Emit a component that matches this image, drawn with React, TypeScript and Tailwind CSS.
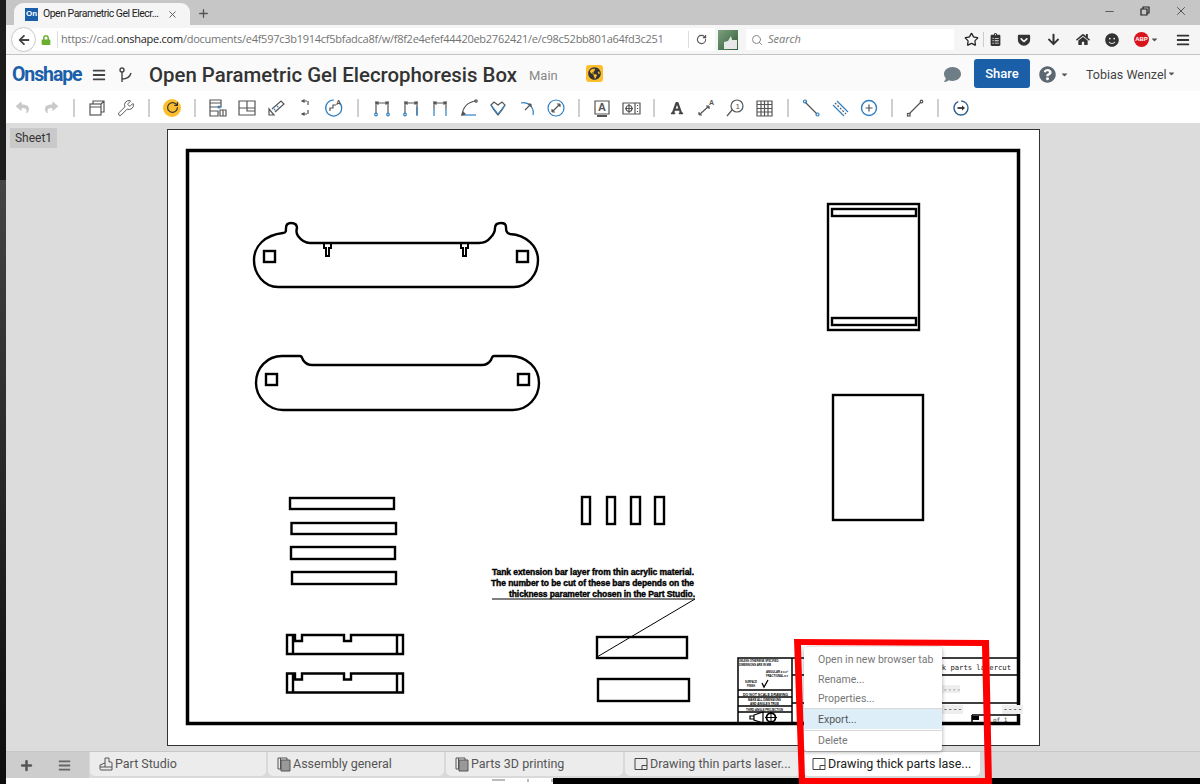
import React from "react";
import { FaReply, FaShare, FaLock, FaArrowLeft, FaClipboardList, FaGetPocket, FaArrowDown, FaHome, FaSmile, FaComment, FaQuestionCircle, FaGlobeAmericas, FaCaretDown, FaBars, FaFont } from "react-icons/fa";
import { RotateCw, Search, Star, Wrench, X, Plus, Minus } from "lucide-react";

const G = "#555";
const B = "#2f7fc1";

function Cell({ children }: { children?: React.ReactNode }) {
  return <div className="w-[29px] flex items-center justify-center shrink-0">{children}</div>;
}
function Ico({ children }: { children: React.ReactNode }) {
  return (
    <svg width="20" height="20" viewBox="0 0 20 20" fill="none" stroke={G} strokeWidth="1.2">
      {children}
    </svg>
  );
}
function Sep({ w }: { w: string }) {
  return (
    <div className={`${w} flex justify-center shrink-0`}>
      <div className="w-[2px] h-[18px] bg-[#cfcfcf]" />
    </div>
  );
}

function Toolbar() {
  return (
    <div className="h-[32px] bg-white flex items-center pl-[1.5px] pt-px shrink-0">
      <Cell><FaReply size={13} color="#c9c9c9" /></Cell>
      <Cell><FaShare size={13} color="#c9c9c9" /></Cell>
      <Sep w="w-[17px]" />
      <Cell><Ico><rect x="3" y="6" width="11" height="11" /><path d="M6 6V3h11v11h-3M14 6l3-3M3 9h11" /></Ico></Cell>
      <Cell><Wrench size={18} color={G} strokeWidth={1.3} /></Cell>
      <Sep w="w-[17px]" />
      <Cell>
        <div className="w-[18px] h-[18px] rounded-full bg-[#fdbe2e] flex items-center justify-center">
          <RotateCw size={13} color="#333" strokeWidth={2.2} />
        </div>
      </Cell>
      <Sep w="w-[17px]" />
      <Cell><Ico><path d="M2 2h11v7H2zM2 5h11M2 9v9h8v-5H2M12 12h6v6h-6zM15 12v6" /><circle cx="11" cy="9" r="1" stroke={B} /></Ico></Cell>
      <Cell><Ico><path d="M2 3h16v14H2zM2 10h16M10 3v7M10 10v3h8" /></Ico></Cell>
      <Cell><Ico><path d="M3 17v-6l5 6zM6 11l9-8 3 3-9 8" /><path d="M8 11l2 2M11 8l2 2" stroke={B} strokeDasharray="2 1" /></Ico></Cell>
      <Cell><Ico><path d="M9 3h3M13 3v4M13 12v4M9 16h3M11 3H8M10 16H7" /><path d="M7 3l2-1v2zM7 16l2-1v2z" fill={G} /></Ico></Cell>
      <Cell><Ico><path d="M15 4a8 8 0 1 1-5-2" stroke={B} /><path d="M6 13v-3h3V7h3" /><text x="12" y="7" fontSize="7" fontFamily="Liberation Sans" fontWeight="700" fill={G} stroke="none">A</text></Ico></Cell>
      <Sep w="w-[19px]" />
      <Cell><Ico><path d="M4 3v12M16 3v12M4 5h12" /><path d="M4 5l2-1v2zM16 5l-2-1v2z" fill={G} /><circle cx="4" cy="16.5" r="1.3" stroke={B} /><circle cx="16" cy="16.5" r="1.3" stroke={B} /></Ico></Cell>
      <Cell><Ico><path d="M4 3v12M16 3v14M4 5h12" /><path d="M4 5l2-1v2zM16 5l-2-1v2z" fill={G} /><circle cx="4" cy="16.5" r="1.3" stroke={B} /><path d="M16 9v9" stroke={B} /></Ico></Cell>
      <Cell><Ico><path d="M4 3v8M16 3v8M4 5h12" /><path d="M4 5l2-1v2zM16 5l-2-1v2z" fill={G} /><path d="M4 11v7M16 11v7" stroke={B} /></Ico></Cell>
      <Cell><Ico><path d="M17 3C9 4 4 9 3 17" /><path d="M3 17h14" stroke={B} /><circle cx="17" cy="3" r="1.2" /><path d="M3 17l1-3 2 2z" fill={G} /></Ico></Cell>
      <Cell><Ico><path d="M3 7l3-3 4 3 4-3 3 3-3 5-4 5-4-5z" /><path d="M3 7l7 9M17 7l-7 9" stroke={B} /></Ico></Cell>
      <Cell><Ico><path d="M4 5a10 10 0 0 1 12 12" stroke={B} /><path d="M8 12l6-6M14 6v3M14 6h-3" /></Ico></Cell>
      <Cell><Ico><circle cx="10" cy="10" r="8" stroke={B} /><path d="M6 14l8-8M14 6v3M14 6h-3M6 14v-3M6 14h3" /></Ico></Cell>
      <Sep w="w-[17px]" />
      <Cell><Ico><path d="M3 3h14v13H3z" /><path d="M5 18h10" strokeWidth="2" /><text x="6" y="13" fontSize="11" fontWeight="700" fontFamily="Liberation Sans" fill={G} stroke="none">A</text></Ico></Cell>
      <Cell><Ico><path d="M2 5h17v11H2zM14 5v11" /><circle cx="8" cy="10.5" r="3" /><path d="M8 6v9M4 10.5h8M16.5 7v1M16.5 10v1M16.5 13v1" /></Ico></Cell>
      <Sep w="w-[17px]" />
      <Cell><FaFont size={14} color="#444" /></Cell>
      <Cell><Ico><path d="M3 17L13 8M3 17v-3M3 17h3M13 8v3M13 8h-3" /><text x="13" y="7" fontSize="7" fontFamily="Liberation Sans" fontWeight="700" fill={G} stroke="none">A</text></Ico></Cell>
      <Cell><Ico><circle cx="12" cy="8" r="6" /><path d="M7 12l-5 6" /><text x="10.5" y="11" fontSize="8" fontFamily="Liberation Sans" fill={G} stroke="none">1</text></Ico></Cell>
      <Cell><Ico><path d="M3 3h15v15H3zM3 6.5h15M3 10.5h15M3 14h15M7 3v15M10.5 3v15M14 3v15" /></Ico></Cell>
      <Sep w="w-[18px]" />
      <Cell><Ico><path d="M4 4l12 12" /><circle cx="4" cy="3.5" r="1.5" stroke={B} /><circle cx="16.5" cy="16.5" r="1.5" stroke={B} /></Ico></Cell>
      <Cell><Ico><path d="M3 7l11 11M7 3l11 11" stroke={B} /><path d="M5 5l11 11" strokeDasharray="2 1.5" /></Ico></Cell>
      <Cell><Ico><circle cx="10" cy="10" r="7.5" stroke={B} strokeWidth="1.4" /><path d="M10 6.5v7M6.5 10h7" /></Ico></Cell>
      <Sep w="w-[17px]" />
      <Cell><Ico><path d="M4 16L16 4" /><rect x="2.5" y="15.5" width="2.5" height="2.5" /><circle cx="16.5" cy="3.5" r="1.3" /></Ico></Cell>
      <Sep w="w-[17px]" />
      <Cell><Ico><circle cx="10" cy="10" r="7" stroke="#2a5f8f" strokeWidth="1.4" strokeDasharray="30 3" /><path d="M6.5 10h6" strokeWidth="1.8" stroke="#333" /><path d="M11 7.5l3 2.5-3 2.5z" fill="#333" stroke="none" /></Ico></Cell>
    </div>
  );
}

function BrowserChrome() {
  return (
    <>
      <div className="h-[25px] bg-[#c6c6c6] flex items-end shrink-0 pl-[8px] relative">
        <div className="w-[176px] h-[22px] bg-[#f5f5f5] rounded-t-[9px] flex items-center pl-[11px] shrink-0">
          <div className="w-[13px] h-[13px] bg-[#1a5fa8] text-white text-[8px] font-bold flex items-center justify-center font-['Liberation_Sans'] shrink-0">On</div>
          <span className="ml-[5px] text-[10.5px] text-[#222] w-[124px] whitespace-nowrap font-['Roboto'] tracking-[-0.5px] shrink-0">Open Parametric Gel Elecr...</span>
          <X size={11} color="#555" className="shrink-0" />
        </div>
        <Plus size={13} color="#555" strokeWidth={2.4} className="ml-[7px] mb-[5px]" />
        <div className="ml-auto flex items-center mb-[7px] pr-[12px] gap-[23px] text-[#333]">
          <Minus size={13} color="#222" strokeWidth={1.2} />
          <svg width="12" height="12" viewBox="0 0 12 12" fill="none" stroke="#222" strokeWidth="1.2"><path d="M2 4h6v6H2zM4 4V2h6v6H8" /></svg>
          <X size={14} color="#222" strokeWidth={1.2} />
        </div>
      </div>
      <div className="h-[30px] bg-[#f5f5f5] border-b border-[#c4c4c4] flex items-center shrink-0 pl-[5px]">
        <div className="w-[25px] h-[25px] rounded-full bg-white border border-[#c9c9c9] flex items-center justify-center shrink-0 z-10">
          <FaArrowLeft size={12} color="#444" />
        </div>
        <div className="-ml-[4px] w-[683px] h-[23px] bg-white flex items-center pl-[9px] shrink-0">
          <FaLock size={10} color="#6ab02e" className="shrink-0" />
          <div className="ml-[6px] w-px h-[17px] bg-[#ddd] shrink-0" />
          <span className="ml-[3px] text-[11px] text-[#737373] whitespace-nowrap w-[608px] shrink-0 font-['Open_Sans'] tracking-[-0.26px]">
            https://cad.<span className="text-[#222]">onshape.com</span>/documents/e4f597c3b1914cf5bfadca8f/w/f8f2e4efef44420eb2762421/e/c98c52bb801a64fd3c251
          </span>
          <div className="ml-[19px] w-px h-[17px] bg-[#ddd] shrink-0" />
          <RotateCw size={11} color="#555" strokeWidth={2.4} className="ml-[7px] shrink-0" />
        </div>
        <svg width="20" height="20" viewBox="0 0 20 20" className="ml-[3px] shrink-0">
          <defs>
            <linearGradient id="g1" x1="0" y1="0" x2="1" y2="1"><stop offset="0" stopColor="#7f9f7f" /><stop offset="1" stopColor="#2f5f35" /></linearGradient>
          </defs>
          <rect width="20" height="20" fill="url(#g1)" />
          <path d="M6 19v-7l4-1 3-5 1 4h5v9z" fill="#e8e8e8" />
        </svg>
        <div className="ml-[8px] w-[208px] h-[21px] bg-white flex items-center pl-[5px] shrink-0">
          <Search size={12} color="#888" />
          <span className="ml-[5px] italic text-[11px] text-[#777] font-['Open_Sans']">Search</span>
        </div>
        <div className="ml-[10px] w-[15px] flex justify-center shrink-0"><Star size={15} color="#222" strokeWidth={2} /></div>
        <div className="ml-[4px] w-px h-[15px] bg-[#ccc] shrink-0" />
        <div className="ml-[4px] w-[14px] flex justify-center shrink-0"><FaClipboardList size={13} color="#333" /></div>
        <div className="ml-[15px] w-[14px] flex justify-center shrink-0"><FaGetPocket size={14} color="#333" /></div>
        <div className="ml-[15px] w-[14px] flex justify-center shrink-0"><FaArrowDown size={13} color="#333" /></div>
        <div className="ml-[16px] w-[14px] flex justify-center shrink-0"><FaHome size={15} color="#333" /></div>
        <div className="ml-[15px] w-[14px] flex justify-center shrink-0"><FaSmile size={14} color="#333" /></div>
        <div className="ml-[15px] w-[15px] h-[15px] rounded-full bg-[#d8141c] text-white text-[6px] font-bold flex items-center justify-center font-['Liberation_Sans'] shrink-0">ABP</div>
        <FaCaretDown size={9} color="#555" className="ml-[1px] shrink-0" />
        <div className="ml-[17px] shrink-0"><FaBars size={14} color="#333" /></div>
      </div>
    </>
  );
}

function Header() {
  return (
    <div className="h-[36px] bg-[#fafafa] flex items-center shrink-0 pl-[6px] font-['Roboto']">
      <span className="text-[#1a5fa8] text-[19.5px] mt-[4px] font-bold w-[69px] tracking-[-1.1px] whitespace-nowrap">Onshape</span>
      <div className="ml-[11px] mt-[4px]"><FaBars size={14} color="#444" /></div>
      <svg width="16" height="16" viewBox="0 0 16 16" fill="none" stroke="#444" strokeWidth="1.4" className="ml-[12px] mt-[4px]">
        <circle cx="4" cy="3" r="2" />
        <path d="M4 5v10M4 12c6 0 8-2 9-6" />
      </svg>
      <span className="ml-[15px] mt-[4px] w-[369px] text-[20.4px] font-medium text-[#333] whitespace-nowrap">Open Parametric Gel Elecrophoresis Box</span>
      <span className="ml-[11px] mt-[6px] w-[30px] text-[13px] text-[#888] whitespace-nowrap">Main</span>
      <div className="ml-[27px] w-[17px] h-[17px] rounded-[3px] bg-[#fdbe2e] flex items-center justify-center">
        <FaGlobeAmericas size={13} color="#333" />
      </div>
      <FaComment size={17} color="#6f7d87" className="ml-[341px] mt-[2px]" />
      <button className="ml-[13px] w-[56px] h-[29px] pt-[2px] rounded-[3px] bg-[#1a5fa8] text-white text-[13px] font-medium">Share</button>
      <FaQuestionCircle size={17} color="#5c6871" className="ml-[9px] mt-[3px]" />
      <FaCaretDown size={9} color="#555" className="ml-[4px] mt-[2px]" />
      <span className="ml-[17px] mt-[4px] text-[12.5px] text-[#444] w-[80px] whitespace-nowrap">Tobias Wenzel</span>
      <FaCaretDown size={9} color="#555" className="ml-px" />
    </div>
  );
}

function Drawing() {
  const bars = [
    [290, 498, 104, 11], [291.5, 523, 104.5, 11], [291, 547, 104, 12], [292, 572, 104, 12],
    [582, 497, 8, 27], [607, 497, 8, 27], [631, 497, 9, 27], [655, 497, 9, 27],
    [597, 637, 90, 21], [598, 679, 91, 22], [833, 395, 90, 125],
    [264, 251, 11, 11], [517, 251, 11, 11], [266, 374, 11, 11], [518, 374, 11, 11],
    [828, 204, 91, 126], [832, 209, 84, 7], [832, 318, 84, 7],
  ];
  const notched = (y: number) =>
    `M287 ${y}h8v6h7v-6h42v6h7v-6h52v19h-116zM293 ${y}v19M397 ${y}v19`;
  return (
    <svg viewBox="168 130 871 615" className="w-full h-full block" fill="none" stroke="#000" strokeWidth="2.4">
      <rect x="187.5" y="150.5" width="831" height="573" strokeWidth="3.5" />
      <path d="M278 287H514C528 287 538 274 538 260C538 246 526 235 510 234C506 233 506 230 506 227C506 224 504 223 501 223C497 223 495 225 495 228C495 232 494 234 491 237C488 241 484 243 479 243H310C304 243 301 240 298 236C296 233 296 231 297 228C297 225 295 223 291 223C288 223 286 225 286 228C286 231 286 233 283 233C265 235 254 246 254 260C254 274 264 287 278 287Z" />
      <path d="M324 243h7v5h-2v8h-3v-8h-2zM461 243h7v5h-2v8h-3v-8h-2z" strokeWidth="2" />
      <path d="M283 410H513C528 410 539 397 539 383C539 368 527 356 510 356H494C492 356 492 358 491 360C489 363 486 365 482 365H312C308 365 305 363 303 360C302 358 302 356 300 356H282C267 356 256 368 256 383C256 397 268 410 283 410Z" />
      {bars.map(([x, y, w, h], i) => (
        <rect key={i} x={x} y={y} width={w} height={h} />
      ))}
      <path d={notched(635)} />
      <path d={notched(673.5)} />
      <path d="M492 599H695L597 657" strokeWidth="1" />
      <g fontFamily="Liberation Sans" fontWeight="700" fontSize="8.5" fill="#000" stroke="#000" strokeWidth="0.4" textAnchor="end">
        <text x="694" y="575" textLength="202">Tank extension bar layer from thin acrylic material.</text>
        <text x="694" y="586" textLength="203">The number to be cut of these bars depends on the</text>
        <text x="695" y="597" textLength="186">thickness parameter chosen in the Part Studio.</text>
      </g>

      <g strokeWidth="1.5">
        <path d="M738 724V658H1019" />
        <path d="M792 658V724M792 675H1019M792 703H1019M972 715H1019M972 715V724M738 690H792M738 697H792M738 706H792M738 712H792" />
      </g>
      <g fontFamily="Liberation Sans" fontWeight="700" fill="#000" stroke="none" fontSize="3.2">
        <text x="739" y="662" textLength="40" lengthAdjust="spacingAndGlyphs">UNLESS OTHERWISE SPECIFIED:</text>
        <text x="739" y="666" textLength="32" lengthAdjust="spacingAndGlyphs">DIMENSIONS ARE IN MM</text>
        <text x="766" y="673" textLength="22" lengthAdjust="spacingAndGlyphs">ANGULAR ± x.x°</text>
        <text x="766" y="677" textLength="22" lengthAdjust="spacingAndGlyphs">FRACTIONAL ± x</text>
        <text x="745" y="683" textLength="12" lengthAdjust="spacingAndGlyphs">SURFACE</text>
        <text x="747" y="687" textLength="8" lengthAdjust="spacingAndGlyphs">FINISH</text>
        <text x="743" y="695.5" fontSize="4.2" textLength="45" lengthAdjust="spacingAndGlyphs">DO NOT SCALE DRAWING</text>
        <text x="748" y="701" textLength="33" lengthAdjust="spacingAndGlyphs">MAKE ALL DIMENSIONS</text>
        <text x="750" y="705" textLength="29" lengthAdjust="spacingAndGlyphs">AND ANGLES TRUE</text>
        <text x="746" y="710.5" textLength="37" lengthAdjust="spacingAndGlyphs">THIRD ANGLE PROJECTION</text>
      </g>
      <path d="M762 683l2 4 4-7" strokeWidth="1.3" />
      <path d="M754 715l9-3v11l-9-3zM754 715v5M750 716h4v3h-4z" strokeWidth="1.2" />
      <circle cx="771" cy="717.5" r="4.5" strokeWidth="1.8" />
      <path d="M765 717.5h12M771 712v11" strokeWidth="1" />
      <text x="1011" y="669.5" textAnchor="end" fontFamily="DejaVu Sans Mono" fontSize="7.2" fill="#222" stroke="none">k parts lasercut</text>
      <g stroke="none">
        <rect x="942" y="685" width="18" height="8" fill="#eee" />
        <rect x="942" y="705" width="21" height="9" fill="#eee" />
        <rect x="1002" y="705" width="21" height="9" fill="#eee" />
        <text x="943" y="692" fontFamily="DejaVu Sans Mono" fontSize="7.5" fill="#666">----</text>
        <text x="943" y="712" fontFamily="DejaVu Sans Mono" fontSize="8" fill="#333">----</text>
        <text x="1003" y="712" fontFamily="DejaVu Sans Mono" fontSize="8" fill="#333">----</text>
        <path d="M972 716h7v4h-7z" fill="#000" />
        <text x="993" y="722" fontFamily="DejaVu Sans Mono" fontSize="6" fill="#333">of 1</text>
      </g>
    </svg>
  );
}

function Tab({ icon, label, active, w }: { icon: React.ReactNode; label: string; active?: boolean; w: string }) {
  return (
    <div className={`${w} h-[24px] flex items-center pl-[9px] rounded-b-[5px] shrink-0 ${active ? "bg-white text-[#222]" : "bg-[#ececec] text-[#555]"}`}>
      {icon}
      <span className="ml-[2px] text-[12.5px] whitespace-nowrap">{label}</span>
    </div>
  );
}
const PS = (
  <svg width="14" height="15" viewBox="0 0 14 15" fill="none" stroke="#555" strokeWidth="1"><path d="M6 1h4v4h2a1 1 0 0 1 1 1v7H2a1 1 0 0 1-1-1V8l5-2zM1 10h12M6 6v4" /></svg>
);
const AS = (
  <svg width="14" height="15" viewBox="0 0 14 15" fill="none" stroke="#555" strokeWidth="1"><path d="M1 1h9v11H1zM3.5 1v11" /><path d="M4 3h9v11H4z" fill="#999" /></svg>
);
const DR = (
  <svg width="14" height="14" viewBox="0 0 14 14" fill="none" stroke="#444" strokeWidth="1"><path d="M1 1.5h12v11H1zM8 12.5v-4h5" /></svg>
);

export default function App() {
  return (
    <div className="w-[1200px] h-[784px] relative overflow-hidden flex bg-black font-['Roboto']">
      <div className="w-[6px] shrink-0 flex flex-col">
        <div className="h-[180px] bg-[#1c1c1c]" />
        <div className="flex-1 bg-linear-to-b from-[#444] to-[#0d0d0d]" />
      </div>
      <div className="w-[1194px] flex flex-col">
        <BrowserChrome />
        <Header />
        <Toolbar />
        <div className="h-[628px] bg-[#dcdcdc] flex items-start pt-[5px] pl-[4px] shrink-0">
          <div className="w-[47px] h-[20px] bg-[#c9c9c9] text-[#333] text-[12px] flex items-center justify-center shrink-0">Sheet1</div>
          <div className="ml-[110px] mt-px w-[873px] h-[617px] bg-white border border-[#333] shrink-0">
            <Drawing />
          </div>
        </div>
        <div className="h-[27px] bg-[#d9d9d9] border-t border-[#c8c8c8] flex shrink-0">
          <div className="w-[83px] h-[26px] bg-[#cdcdcd] flex items-center shrink-0">
            <Plus size={15} color="#555" strokeWidth={4} className="ml-[13px]" />
            <div className="ml-[24px]"><FaBars size={13} color="#666" /></div>
          </div>
          <div className="flex gap-[2px] ml-px">
            <Tab w="w-[176px]" icon={PS} label="Part Studio" />
            <Tab w="w-[176px]" icon={AS} label="Assembly general" />
            <Tab w="w-[177px]" icon={AS} label="Parts 3D printing" />
            <Tab w="w-[176px]" icon={DR} label="Drawing thin parts laser..." />
            <Tab w="w-[177px]" icon={DR} label="Drawing thick parts lase..." active />
          </div>
        </div>
        <div className="h-[6px] flex shrink-0">
          <div className="w-[547px] bg-white pl-[486px] pt-[1px] flex gap-[22px] items-start">
            <div className="w-[13px] h-[2px] bg-[#bbb]" />
            <div className="w-[2px] h-[3px] bg-[#bbb]" />
            <div className="w-[2px] h-[3px] bg-[#bbb]" />
          </div>
        </div>
      </div>

      <div className="absolute left-[804px] top-[647px] w-[138px] h-[104px] bg-white rounded-[3px] shadow-[0_1px_4px_rgba(0,0,0,0.35)] text-[10.5px] text-[#777]">
        <div className="h-[20px] mt-[3px] pl-[14px] flex items-center whitespace-nowrap">Open in new browser tab</div>
        <div className="h-[19px] pl-[14px] flex items-center">Rename...</div>
        <div className="h-[19px] pl-[14px] flex items-center">Properties...</div>
        <div className="h-px bg-[#d8d8d8]" />
        <div className="h-[20px] pl-[14px] pt-[2px] flex items-center bg-[#deeef9] text-[#555]">Export...</div>
        <div className="h-px mt-px bg-[#d8d8d8]" />
        <div className="h-[20px] pl-[14px] flex items-center">Delete</div>
      </div>

      <svg className="absolute left-0 top-0 pointer-events-none" width="1200" height="784" viewBox="0 0 1200 784">
        <path fillRule="evenodd" fill="#ff0000" d="M794 639L989 640L992 784L799 784ZM801 645L982 646L985 778L805 778Z" />
      </svg>
    </div>
  );
}
